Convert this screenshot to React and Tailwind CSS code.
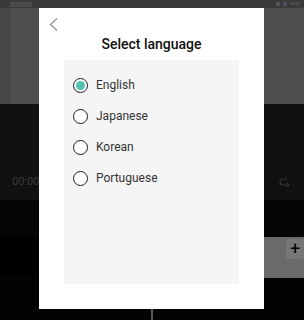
import React from 'react';

const languages = ['English', 'Japanese', 'Korean', 'Portuguese'];

function Radio({ checked }) {
  return (
    <span className="flex h-[15px] w-[15px] shrink-0 items-center justify-center rounded-full border-[1.5px] border-[#1a1a1a] bg-white">
      {checked && <span className="h-[9px] w-[9px] rounded-full bg-[#4fc3b1]" />}
    </span>
  );
}

export default function App() {
  return (
    <div className="relative h-[320px] w-[304px] overflow-hidden bg-black font-['Roboto',sans-serif]">
      {/* editor behind the dimmed overlay */}
      <div className="flex h-full flex-col">
        <div className="flex h-[8px] items-center bg-[#3a3a3a] pl-[10px]">
          <div className="h-[5px] w-[22px] bg-[#4a4a4a]" />
          <div className="ml-auto mr-[4px] flex gap-[3px]">
            <div className="h-[4px] w-[4px] bg-[#555]" />
            <div className="h-[4px] w-[4px] rounded-full bg-[#556]" />
            <div className="h-[3px] w-[10px] bg-[#4a4a4a]" />
          </div>
        </div>
        <div className="flex h-[96px]">
          <div className="w-[10px] bg-[#474747]" />
          <div className="flex-1 bg-[#4e4e4e]" />
        </div>
        <div className="flex h-[96px] items-end justify-between bg-[#111111] px-[12px] pb-[10px]">
          <span className="text-[11px] text-[#3a3a3a]">00:00.</span>
          <svg width="14" height="14" viewBox="0 0 14 14" fill="none" stroke="#333" strokeWidth="1.2">
            <path d="M9 3h-4a3 3 0 0 0 0 6h6" />
            <path d="M9 7l2 2-2 2" />
          </svg>
        </div>
        <div className="h-[37px] bg-[#050505]" />
        <div className="flex h-[41px] justify-end">
          <div className="flex w-[40px] items-start justify-end bg-[#6a6a6a] pt-[2px]">
            <div className="flex h-[20px] w-[18px] items-center justify-center rounded-[3px] bg-[#777] text-[18px] leading-none text-black">+</div>
          </div>
        </div>
        <div className="flex flex-1 justify-center bg-[#030303]">
          <div className="mt-[22px] w-[2px] bg-[#555]" />
        </div>
      </div>

      {/* modal */}
      <div className="absolute left-[39px] top-[8px] flex h-[301px] w-[225px] flex-col bg-white">
        <div className="relative h-[52px]">
          <svg className="absolute left-[10px] top-[10px]" width="10" height="13" viewBox="0 0 10 13" fill="none" stroke="#8a8a8a" strokeWidth="1.1">
            <path d="M8 0.5L1.5 6.5L8 12.5" />
          </svg>
          <div className="pt-[27px] text-center text-[14px] font-medium leading-[18px] text-[#111]">Select language</div>
        </div>
        <div className="mx-[25px] flex h-[224px] flex-col gap-[13px] bg-[#f5f5f5] pl-[9px] pt-[16px]">
          {languages.map((lang, i) => (
            <div key={lang} className="flex h-[18px] items-center gap-[8px]">
              <Radio checked={i === 0} />
              <span className="text-[12px] text-[#333]">{lang}</span>
            </div>
          ))}
        </div>
      </div>
    </div>
  );
}
